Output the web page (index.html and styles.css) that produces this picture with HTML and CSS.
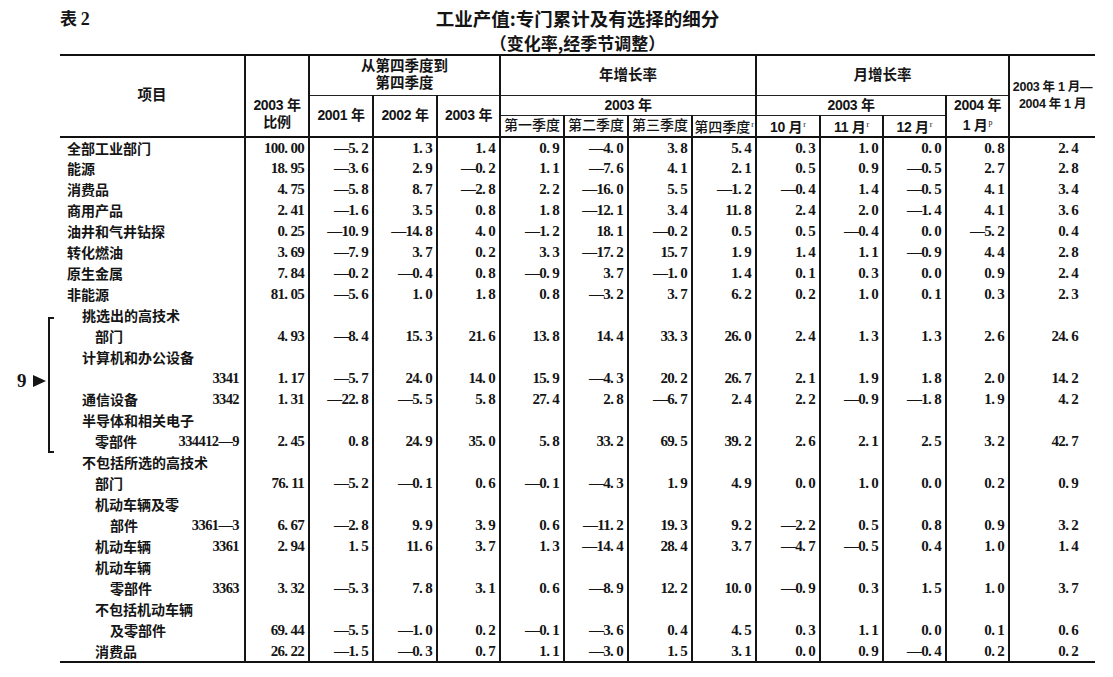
FILE: index.html
```html
<!DOCTYPE html>
<html lang="zh-CN">
<head>
<meta charset="utf-8">
<title>表 2 工业产值</title>
<link rel="stylesheet" href="styles.css">
</head>
<body>
<div class="page">
  <div class="heading">
    <div class="tag">表 <span class="n">2</span></div>
    <div class="title">工业产值:专门累计及有选择的细分</div>
    <div></div>
  </div>
  <div class="subtitle">（变化率,经季节调整）</div>

  <table class="data">
    <colgroup>
      <col class="c-lbl">
      <col class="c64"><col class="c64"><col class="c64"><col class="c63">
      <col class="c64"><col class="c64"><col class="c64"><col class="c64">
      <col class="c64"><col class="c63"><col class="c63"><col class="c63">
      <col class="c-last">
    </colgroup>
    <thead>
      <tr class="h1">
        <th rowspan="3" class="item">项目</th>
        <th rowspan="3" class="share">2003 年<br>比例</th>
        <th colspan="3">从第四季度到<br>第四季度</th>
        <th colspan="4">年增长率</th>
        <th colspan="4">月增长率</th>
        <th rowspan="3" class="last">2003 年 1 月—<br>2004 年 1 月</th>
      </tr>
      <tr class="h2">
        <th rowspan="2">2001 年</th>
        <th rowspan="2">2002 年</th>
        <th rowspan="2">2003 年</th>
        <th colspan="4">2003 年</th>
        <th colspan="3">2003 年</th>
        <th rowspan="2">2004 年<br>1 月<span class="s">p</span></th>
      </tr>
      <tr class="h3">
        <th class="q">第一季度</th>
        <th class="q">第二季度</th>
        <th class="q">第三季度</th>
        <th class="q">第四季度<span class="s">r</span></th>
        <th>10 月<span class="s">r</span></th>
        <th>11 月<span class="s">r</span></th>
        <th>12 月<span class="s">r</span></th>
      </tr>
    </thead>
    <tbody>
      <tr><td class="lbl"><div class="lb">全部工业部门</div></td><td>100. 00</td><td>—5. 2</td><td>1. 3</td><td>1. 4</td><td>0. 9</td><td>—4. 0</td><td>3. 8</td><td>5. 4</td><td>0. 3</td><td>1. 0</td><td>0. 0</td><td>0. 8</td><td>2. 4</td></tr>
      <tr><td class="lbl"><div class="lb">能源</div></td><td>18. 95</td><td>—3. 6</td><td>2. 9</td><td>—0. 2</td><td>1. 1</td><td>—7. 6</td><td>4. 1</td><td>2. 1</td><td>0. 5</td><td>0. 9</td><td>—0. 5</td><td>2. 7</td><td>2. 8</td></tr>
      <tr><td class="lbl"><div class="lb">消费品</div></td><td>4. 75</td><td>—5. 8</td><td>8. 7</td><td>—2. 8</td><td>2. 2</td><td>—16. 0</td><td>5. 5</td><td>—1. 2</td><td>—0. 4</td><td>1. 4</td><td>—0. 5</td><td>4. 1</td><td>3. 4</td></tr>
      <tr><td class="lbl"><div class="lb">商用产品</div></td><td>2. 41</td><td>—1. 6</td><td>3. 5</td><td>0. 8</td><td>1. 8</td><td>—12. 1</td><td>3. 4</td><td>11. 8</td><td>2. 4</td><td>2. 0</td><td>—1. 4</td><td>4. 1</td><td>3. 6</td></tr>
      <tr><td class="lbl"><div class="lb">油井和气井钻探</div></td><td>0. 25</td><td>—10. 9</td><td>—14. 8</td><td>4. 0</td><td>—1. 2</td><td>18. 1</td><td>—0. 2</td><td>0. 5</td><td>0. 5</td><td>—0. 4</td><td>0. 0</td><td>—5. 2</td><td>0. 4</td></tr>
      <tr><td class="lbl"><div class="lb">转化燃油</div></td><td>3. 69</td><td>—7. 9</td><td>3. 7</td><td>0. 2</td><td>3. 3</td><td>—17. 2</td><td>15. 7</td><td>1. 9</td><td>1. 4</td><td>1. 1</td><td>—0. 9</td><td>4. 4</td><td>2. 8</td></tr>
      <tr><td class="lbl"><div class="lb">原生金属</div></td><td>7. 84</td><td>—0. 2</td><td>—0. 4</td><td>0. 8</td><td>—0. 9</td><td>3. 7</td><td>—1. 0</td><td>1. 4</td><td>0. 1</td><td>0. 3</td><td>0. 0</td><td>0. 9</td><td>2. 4</td></tr>
      <tr><td class="lbl"><div class="lb">非能源</div></td><td>81. 05</td><td>—5. 6</td><td>1. 0</td><td>1. 8</td><td>0. 8</td><td>—3. 2</td><td>3. 7</td><td>6. 2</td><td>0. 2</td><td>1. 0</td><td>0. 1</td><td>0. 3</td><td>2. 3</td></tr>
      <tr><td class="lbl"><div class="lb i1">挑选出的高技术</div></td><td></td><td></td><td></td><td></td><td></td><td></td><td></td><td></td><td></td><td></td><td></td><td></td><td></td></tr>
      <tr><td class="lbl"><div class="lb i2">部门</div></td><td>4. 93</td><td>—8. 4</td><td>15. 3</td><td>21. 6</td><td>13. 8</td><td>14. 4</td><td>33. 3</td><td>26. 0</td><td>2. 4</td><td>1. 3</td><td>1. 3</td><td>2. 6</td><td>24. 6</td></tr>
      <tr><td class="lbl"><div class="lb i1">计算机和办公设备</div></td><td></td><td></td><td></td><td></td><td></td><td></td><td></td><td></td><td></td><td></td><td></td><td></td><td></td></tr>
      <tr><td class="lbl"><div class="lb i1"><span class="code">3341</span></div></td><td>1. 17</td><td>—5. 7</td><td>24. 0</td><td>14. 0</td><td>15. 9</td><td>—4. 3</td><td>20. 2</td><td>26. 7</td><td>2. 1</td><td>1. 9</td><td>1. 8</td><td>2. 0</td><td>14. 2</td></tr>
      <tr><td class="lbl"><div class="lb i1">通信设备<span class="code">3342</span></div></td><td>1. 31</td><td>—22. 8</td><td>—5. 5</td><td>5. 8</td><td>27. 4</td><td>2. 8</td><td>—6. 7</td><td>2. 4</td><td>2. 2</td><td>—0. 9</td><td>—1. 8</td><td>1. 9</td><td>4. 2</td></tr>
      <tr><td class="lbl"><div class="lb i1">半导体和相关电子</div></td><td></td><td></td><td></td><td></td><td></td><td></td><td></td><td></td><td></td><td></td><td></td><td></td><td></td></tr>
      <tr><td class="lbl"><div class="lb i2">零部件<span class="code">334412—9</span></div></td><td>2. 45</td><td>0. 8</td><td>24. 9</td><td>35. 0</td><td>5. 8</td><td>33. 2</td><td>69. 5</td><td>39. 2</td><td>2. 6</td><td>2. 1</td><td>2. 5</td><td>3. 2</td><td>42. 7</td></tr>
      <tr><td class="lbl"><div class="lb i1">不包括所选的高技术</div></td><td></td><td></td><td></td><td></td><td></td><td></td><td></td><td></td><td></td><td></td><td></td><td></td><td></td></tr>
      <tr><td class="lbl"><div class="lb i2">部门</div></td><td>76. 11</td><td>—5. 2</td><td>—0. 1</td><td>0. 6</td><td>—0. 1</td><td>—4. 3</td><td>1. 9</td><td>4. 9</td><td>0. 0</td><td>1. 0</td><td>0. 0</td><td>0. 2</td><td>0. 9</td></tr>
      <tr><td class="lbl"><div class="lb i2">机动车辆及零</div></td><td></td><td></td><td></td><td></td><td></td><td></td><td></td><td></td><td></td><td></td><td></td><td></td><td></td></tr>
      <tr><td class="lbl"><div class="lb i3">部件<span class="code">3361—3</span></div></td><td>6. 67</td><td>—2. 8</td><td>9. 9</td><td>3. 9</td><td>0. 6</td><td>—11. 2</td><td>19. 3</td><td>9. 2</td><td>—2. 2</td><td>0. 5</td><td>0. 8</td><td>0. 9</td><td>3. 2</td></tr>
      <tr><td class="lbl"><div class="lb i2">机动车辆<span class="code">3361</span></div></td><td>2. 94</td><td>1. 5</td><td>11. 6</td><td>3. 7</td><td>1. 3</td><td>—14. 4</td><td>28. 4</td><td>3. 7</td><td>—4. 7</td><td>—0. 5</td><td>0. 4</td><td>1. 0</td><td>1. 4</td></tr>
      <tr><td class="lbl"><div class="lb i2">机动车辆</div></td><td></td><td></td><td></td><td></td><td></td><td></td><td></td><td></td><td></td><td></td><td></td><td></td><td></td></tr>
      <tr><td class="lbl"><div class="lb i3">零部件<span class="code">3363</span></div></td><td>3. 32</td><td>—5. 3</td><td>7. 8</td><td>3. 1</td><td>0. 6</td><td>—8. 9</td><td>12. 2</td><td>10. 0</td><td>—0. 9</td><td>0. 3</td><td>1. 5</td><td>1. 0</td><td>3. 7</td></tr>
      <tr><td class="lbl"><div class="lb i2">不包括机动车辆</div></td><td></td><td></td><td></td><td></td><td></td><td></td><td></td><td></td><td></td><td></td><td></td><td></td><td></td></tr>
      <tr><td class="lbl"><div class="lb i3">及零部件</div></td><td>69. 44</td><td>—5. 5</td><td>—1. 0</td><td>0. 2</td><td>—0. 1</td><td>—3. 6</td><td>0. 4</td><td>4. 5</td><td>0. 3</td><td>1. 1</td><td>0. 0</td><td>0. 1</td><td>0. 6</td></tr>
      <tr><td class="lbl"><div class="lb i2">消费品</div></td><td>26. 22</td><td>—1. 5</td><td>—0. 3</td><td>0. 7</td><td>1. 1</td><td>—3. 0</td><td>1. 5</td><td>3. 1</td><td>0. 0</td><td>0. 9</td><td>—0. 4</td><td>0. 2</td><td>0. 2</td></tr>
    </tbody>
  </table>

  <div class="marker"><span>9</span><svg class="arrow" width="13" height="12" viewBox="0 0 13 12"><polygon points="0,0 13,6 0,12"/></svg></div>
  <div class="bracket"></div>
</div>
</body>
</html>
```

FILE: styles.css
```css
* { box-sizing: border-box; }

html, body {
  margin: 0;
  background: #ffffff;
}

body {
  color: #151515;
  font-family: "Liberation Serif", "Noto Sans CJK SC", serif;
}

.page {
  position: relative;
  width: 1113px;
  height: 677px;
  padding: 6px 0 0 60px;
}

.heading {
  width: 1035px;
  display: grid;
  grid-template-columns: 1fr auto 1fr;
  align-items: center;
}

.tag {
  font-family: "Noto Sans CJK SC", sans-serif;
  font-weight: 700;
  font-size: 17px;
  line-height: 23px;
}

.tag .n {
  font-family: "Liberation Serif", serif;
  font-size: 18px;
}

.title {
  font-family: "Noto Sans CJK SC", sans-serif;
  font-weight: 700;
  font-size: 18.5px;
  line-height: 23px;
}

.subtitle {
  width: 1035px;
  text-align: center;
  font-family: "Noto Sans CJK SC", sans-serif;
  font-weight: 700;
  font-size: 17px;
  line-height: 23px;
}

.data {
  margin-top: 0;
  width: 1035px;
  table-layout: fixed;
  border-collapse: collapse;
  border-top: 2px solid #111;
  border-bottom: 2px solid #111;
}

.c-lbl { width: 185px; }
.c64 { width: 64px; }
.c63 { width: 63px; }
.c-last { width: 86px; }

.data thead {
  border-bottom: 2px solid #111;
}

.data th {
  padding: 0;
  font-family: "Liberation Sans", "Noto Sans CJK SC", sans-serif;
  font-size: 14px;
  font-weight: 700;
  line-height: 17px;
  letter-spacing: -0.3px;
  text-align: center;
  vertical-align: middle;
  white-space: nowrap;
  border-top: 1px solid #222;
  border-bottom: 1px solid #222;
  border-left: 2px solid #151515;
  border-right: 2px solid #151515;
}

.data th.item { border-left: none; font-size: 14.5px; letter-spacing: 0; }
.data th.last { border-right: none; font-size: 12.5px; }
.data th.share { vertical-align: bottom; padding-bottom: 5px; }
.data th.q { font-size: 14px; font-weight: 500; letter-spacing: 0; }

.h1 { height: 40px; }
.h1 th[colspan] { font-size: 14.5px; letter-spacing: 0; }
.h2 { height: 20px; }
.h3 { height: 20px; }

.s {
  font-family: "Liberation Serif", serif;
  font-size: 8px;
  font-weight: 400;
  vertical-align: 5px;
  margin-left: 1px;
  letter-spacing: 0;
}

.data td {
  height: 21px;
  padding: 0 4px 0 0;
  font-family: "Liberation Serif", serif;
  font-size: 15px;
  font-weight: 700;
  line-height: 20px;
  letter-spacing: -0.7px;
  text-align: right;
  vertical-align: middle;
  white-space: nowrap;
  border-left: 2px solid #151515;
}

.data td:last-child { padding-right: 17px; }

.data td.lbl {
  border-left: none;
  padding: 0 5px 0 7px;
  text-align: left;
  font-family: "Noto Sans CJK SC", sans-serif;
  font-size: 14px;
  letter-spacing: 0;
}

.lb {
  display: flex;
  align-items: center;
  line-height: 20px;
}

.lb.i1 { padding-left: 15px; }
.lb.i2 { padding-left: 28px; }
.lb.i3 { padding-left: 43px; }

.code {
  margin-left: auto;
  font-family: "Liberation Serif", serif;
  font-size: 14.5px;
  font-weight: 700;
  letter-spacing: -0.6px;
}

.marker {
  position: absolute;
  left: 17px;
  top: 371px;
  display: flex;
  align-items: center;
  gap: 6px;
  font-family: "Liberation Serif", serif;
  font-weight: 700;
  font-size: 19px;
  line-height: 20px;
}

.arrow polygon { fill: #151515; }

.bracket {
  position: absolute;
  left: 48px;
  top: 317px;
  width: 6px;
  height: 136px;
  border-left: 2px solid #151515;
  border-top: 2px solid #151515;
  border-bottom: 2px solid #151515;
}
```
